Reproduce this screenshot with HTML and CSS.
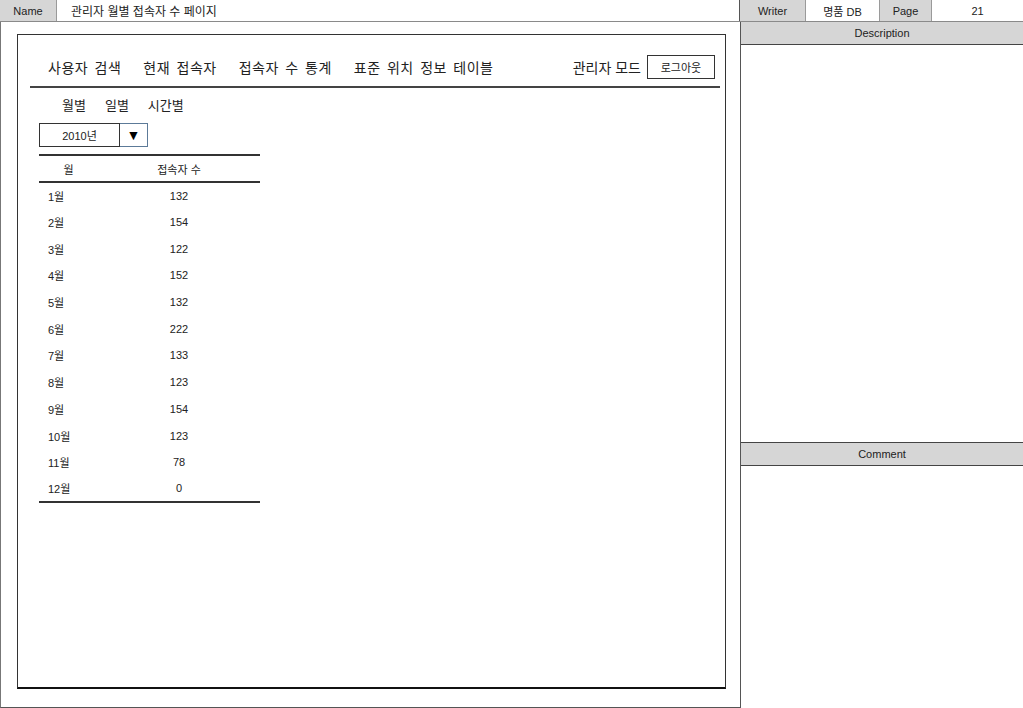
FILE: index.html
```html
<!DOCTYPE html>
<html lang="ko">
<head>
    <meta charset="UTF-8">
    <title>관리자 월별 접속자 수 페이지</title>
    <link rel="stylesheet" href="styles.css">
</head>
<body>
    <div class="sheet">
        <div class="topbar">
            <div class="cell label name-label">Name</div>
            <div class="cell title">관리자 월별 접속자 수 페이지</div>
            <div class="cell label writer-label">Writer</div>
            <div class="cell writer-value">명품 DB</div>
            <div class="cell label page-label">Page</div>
            <div class="cell page-value">21</div>
        </div>

        <div class="main">
            <div class="canvas">
                <div class="screen">
                    <div class="nav">
                        <span class="nav-link">사용자 검색</span>
                        <span class="nav-link">현재 접속자</span>
                        <span class="nav-link">접속자 수 통계</span>
                        <span class="nav-link">표준 위치 정보 테이블</span>
                        <span class="nav-admin">관리자 모드</span>
                        <span class="logout-button">로그아웃</span>
                    </div>

                    <div class="content">
                        <div class="subtabs">
                            <span>월별</span>
                            <span>일별</span>
                            <span>시간별</span>
                        </div>

                        <div class="year-select">
                            <span class="year-value">2010년</span>
                            <span class="year-arrow">&#9660;</span>
                        </div>

                        <table class="stats-table">
                            <thead>
                                <tr><th class="col-month">월</th><th>접속자 수</th></tr>
                            </thead>
                            <tbody id="stats-body"></tbody>
                        </table>
                    </div>
                </div>
            </div>

            <div class="side">
                <div class="side-head">Description</div>
                <div class="side-body description"></div>
                <div class="side-head comment-head">Comment</div>
                <div class="side-body"></div>
            </div>
        </div>
    </div>

    <script>
        const counts = [132, 154, 122, 152, 132, 222, 133, 123, 154, 123, 78, 0];
        const body = document.getElementById('stats-body');
        counts.forEach((count, i) => {
            const row = document.createElement('tr');
            row.innerHTML = `<td class="col-month">${i + 1}월</td><td>${count}</td>`;
            body.appendChild(row);
        });
    </script>
</body>
</html>
```

FILE: styles.css
```css
* {
    box-sizing: border-box;
}

body {
    margin: 0;
    padding: 0;
    background-color: #fff;
    font-family: 'Liberation Sans', 'Noto Sans CJK KR', sans-serif;
    color: #222;
}

.sheet {
    width: 1023px;
    height: 708px;
    display: flex;
    flex-direction: column;
    overflow: hidden;
}

.topbar {
    height: 22px;
    flex: none;
    display: flex;
    border-bottom: 1px solid #8a8a8a;
    font-size: 11px;
}

.cell {
    display: flex;
    align-items: center;
    justify-content: center;
    border-right: 1px solid #9a9a9a;
}

.label {
    background-color: #d6d6d6;
}

.name-label {
    width: 57px;
}

.title {
    width: 683px;
    justify-content: flex-start;
    padding-left: 14px;
    font-size: 12px;
    border-right: 1px solid #555;
}

.writer-label {
    width: 66px;
}

.writer-value {
    width: 74px;
}

.page-label {
    width: 52px;
}

.page-value {
    flex: 1;
    border-right: none;
}

.main {
    flex: 1;
    display: flex;
}

.canvas {
    width: 740px;
    flex: none;
    padding: 12px 14px 18px 16px;
    border-left: 1px solid #777;
    border-bottom: 1px solid #555;
    display: flex;
}

.screen {
    flex: 1;
    border: 1px solid #333;
    border-bottom: 2px solid #111;
    display: flex;
    flex-direction: column;
}

.nav {
    margin: 18px 5px 0 12px;
    padding: 0 5px 5px 18px;
    height: 35px;
    display: flex;
    align-items: center;
    border-bottom: 2px solid #444;
    font-size: 14px;
    font-family: 'Noto Sans CJK KR', sans-serif;
}

.nav-link {
    margin-right: 22px;
    letter-spacing: 0.5px;
    word-spacing: 2px;
}

.nav-admin {
    margin-left: auto;
    margin-right: 6px;
}

.logout-button {
    border: 1px solid #333;
    height: 24px;
    width: 68px;
    display: flex;
    align-items: center;
    justify-content: center;
    font-size: 11px;
}

.content {
    padding-left: 21px;
}

.subtabs {
    margin-top: 6px;
    padding-left: 23px;
    height: 20px;
    display: flex;
    gap: 19px;
    align-items: center;
    font-size: 13px;
    font-family: 'Noto Sans CJK KR', sans-serif;
}

.year-select {
    margin-top: 9px;
    display: flex;
    height: 24px;
    width: 109px;
}

.year-value {
    width: 81px;
    border: 1px solid #333;
    display: flex;
    align-items: center;
    justify-content: center;
    font-size: 11px;
}

.year-arrow {
    width: 28px;
    border: 1px solid #5c7a98;
    border-left: none;
    display: flex;
    align-items: center;
    justify-content: center;
    font-size: 14px;
    color: #000;
}

.stats-table {
    margin-top: 7px;
    width: 221px;
    border-collapse: collapse;
    border-top: 2px solid #333;
    border-bottom: 2px solid #333;
    font-size: 11px;
}

.stats-table th {
    height: 27px;
    padding: 0;
    font-weight: normal;
    border-bottom: 2px solid #333;
    text-align: center;
}

.stats-table td {
    height: 26.7px;
    padding: 0;
    text-align: center;
}

.stats-table th.col-month {
    width: 59px;
}

.stats-table td.col-month {
    text-align: left;
    padding-left: 9px;
}

.side {
    flex: 1;
    display: flex;
    flex-direction: column;
    border-left: 1px solid #555;
}

.side-head {
    height: 23px;
    flex: none;
    background-color: #d6d6d6;
    border-bottom: 1px solid #444;
    display: flex;
    align-items: center;
    justify-content: center;
    font-size: 11px;
}

.comment-head {
    height: 24px;
    border-top: 1px solid #444;
}

.side-body {
    flex: 1;
}

.side-body.description {
    flex: none;
    height: 397px;
}
```
